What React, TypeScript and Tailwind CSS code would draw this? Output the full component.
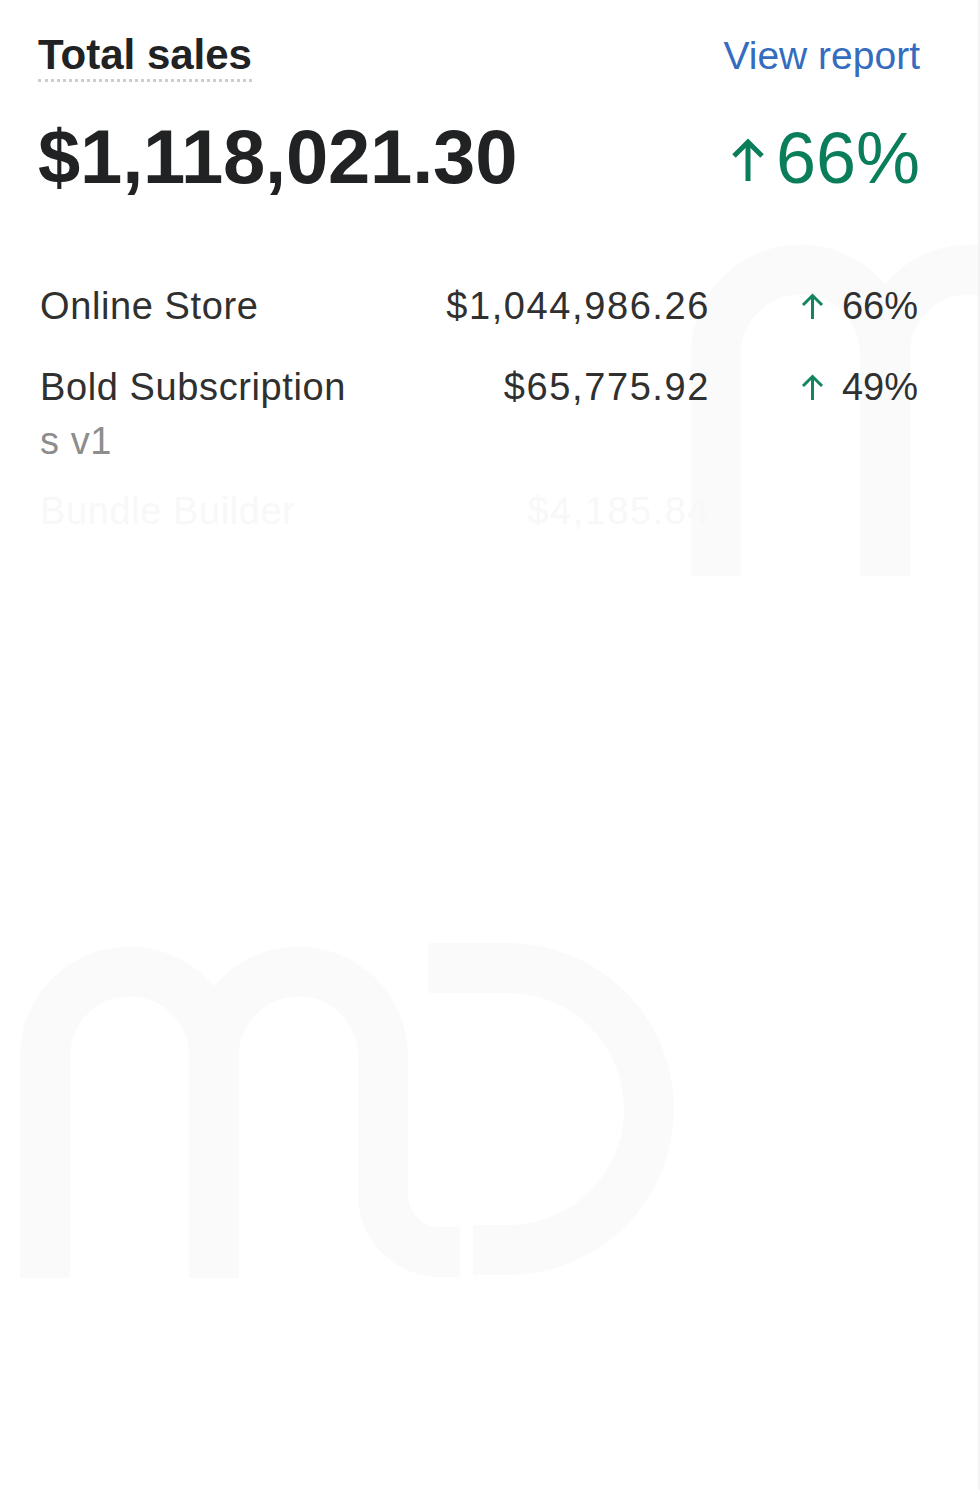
import React from "react";

const sans = { fontFamily: '"Liberation Sans", Arial, sans-serif' };

export default function App() {
  return (
    <div
      className="relative w-[980px] min-h-[1490px] overflow-hidden bg-white border-r-2 border-[#f3f3f3]"
      style={sans}
    >
      {/* faint watermarks */}
      <Watermark className="absolute left-[20px] top-[943px]" />
      <Watermark className="absolute left-[691px] top-[241px]" />

      <div className="relative z-10 pl-[38px] pr-[58px] pt-[34px]">
        {/* header */}
        <div className="flex justify-between items-baseline">
          <span className="text-[42px] leading-none font-bold text-[#202223] pb-[3px] border-b-[3px] border-dotted border-[#cdcdcd]">
            Total sales
          </span>
          <span className="text-[39px] leading-none text-[#356cc0]">View report</span>
        </div>

        <div className="flex justify-between items-baseline mt-[37px]">
          <span className="text-[76px] leading-none font-bold text-[#202223] tracking-[-0.2px]">
            $1,118,021.30
          </span>
          <span className="flex items-baseline gap-[11px] text-[72px] leading-none text-[#0a7d5a]">
            <BigArrow />
            66%
          </span>
        </div>

        {/* channel rows */}
        <div className="mt-[84px] pl-[2px] pr-[2px] text-[38px] leading-[54px]">
          <Row name={["Online Store"]} amount="$1,044,986.26" pct="66%" />
          <Row
            className="mt-[27px]"
            name={["Bold Subscription", "s v1"]}
            amount="$65,775.92"
            pct="49%"
          />
          <div className="mt-[16px] flex text-[#f8f8f8]">
            <span className="flex-1 tracking-[0.6px]">Bundle Builder</span>
            <span className="w-[300px] text-right tracking-[1.5px]">$4,185.84</span>
            <span className="w-[208px]" />
          </div>
        </div>
      </div>
    </div>
  );
}

function Row({ name, amount, pct, className = "" }: any) {
  return (
    <div className={`flex items-start ${className}`}>
      <div className="flex-1 flex flex-col tracking-[0.6px]">
        <span className="text-[#303030]">{name[0]}</span>
        {name[1] && <span className="text-[#8d8d8d]">{name[1]}</span>}
      </div>
      <span className="w-[300px] text-right text-[#303030] tracking-[1.6px]">{amount}</span>
      <span className="w-[208px] flex justify-end items-baseline gap-[18px] text-[#303030]">
        <SmallArrow />
        {pct}
      </span>
    </div>
  );
}

function BigArrow() {
  return (
    <svg width="34" height="43" viewBox="0 0 34 43" fill="none" className="self-center translate-y-[1px]">
      <path d="M17 43V4" stroke="#0a7d5a" strokeWidth="5" />
      <path d="M3 18L17 4L31 18" stroke="#0a7d5a" strokeWidth="5" />
    </svg>
  );
}

function SmallArrow() {
  return (
    <svg width="23" height="26" viewBox="0 0 23 26" fill="none">
      <path d="M11.5 26V3" stroke="#12855f" strokeWidth="3" />
      <path d="M2 12L11.5 2.5L21 12" stroke="#12855f" strokeWidth="3" />
    </svg>
  );
}

function Watermark({ className }: { className: string }) {
  return (
    <svg width="660" height="340" viewBox="0 0 660 340" fill="none" className={className}>
      <g stroke="#fafafa" strokeWidth="50">
        <path d="M25 335V113A84.5 84.5 0 0 1 194 113V335" />
        <path d="M194 113A84.5 84.5 0 0 1 363 113V252A57 57 0 0 0 420 309H440" />
        <path d="M408 25H488A141 141 0 0 1 488 307H453" />
      </g>
    </svg>
  );
}
